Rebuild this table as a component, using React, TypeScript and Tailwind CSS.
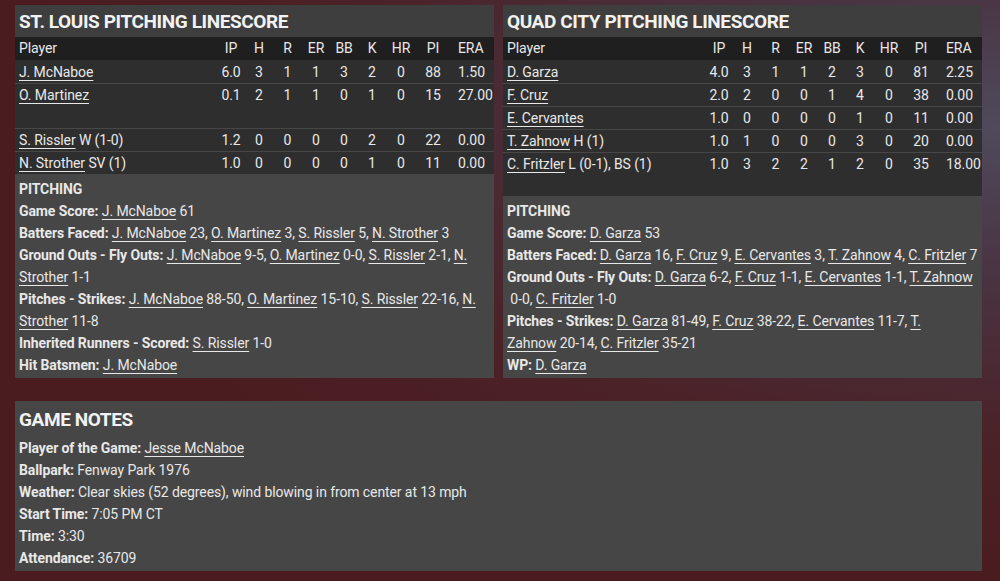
import React from "react";

type Row = { name: string; extra?: string; vals: string[]; tall?: boolean };

const cols = ["IP", "H", "R", "ER", "BB", "K", "HR", "PI", "ERA"];

const gridCls =
  "grid grid-cols-[1fr_28px_28px_29px_28px_28px_28px_30px_34px_44px] items-start";

function L({ children }: { children: React.ReactNode }) {
  return <span className="underline underline-offset-[3px] decoration-1">{children}</span>;
}

function B({ children }: { children: React.ReactNode }) {
  return <span className="font-bold">{children}</span>;
}

function Table({ rows }: { rows: Row[] }) {
  return (
    <div className="flex-1 bg-[#2e2e2e]">
      <div className={`${gridCls} h-[23px] bg-[#1f1f1f] leading-[23px]`}>
        <div className="pl-[4px]">Player</div>
        {cols.map((c) => (
          <div key={c} className={c === "ERA" ? "pl-[8px]" : "text-center"}>
            {c}
          </div>
        ))}
      </div>
      {rows.map((r, i) => (
        <div
          key={i}
          className={`${gridCls} leading-[22px] ${i > 0 ? "border-t border-[#474747]" : ""} ${
            r.tall ? "h-[45px]" : i > 0 ? "h-[23px]" : "h-[23px] pt-[0.5px]"
          }`}
        >
          <div className="pl-[4px] whitespace-nowrap">
            <L>{r.name}</L>
            {r.extra ? <span> {r.extra}</span> : null}
          </div>
          {r.vals.map((v, j) => (
            <div key={j} className={j === 8 ? "pl-[8px] whitespace-nowrap" : "text-center"}>
              {v}
            </div>
          ))}
        </div>
      ))}
    </div>
  );
}

function Panel({
  title,
  rows,
  children,
}: {
  title: string;
  rows: Row[];
  children: React.ReactNode;
}) {
  return (
    <div className="flex flex-col">
      <div className="h-[32px] bg-[#3e3e3e] pl-[4px] text-[19px] font-bold leading-[33px] tracking-[-0.4px] text-[#f2f2f2]">
        {title}
      </div>
      <Table rows={rows} />
      <div className="bg-[#464646] pl-[4px] pt-[4px] pb-[2px] leading-[22px]">{children}</div>
    </div>
  );
}

const leftRows: Row[] = [
  { name: "J. McNaboe", vals: ["6.0", "3", "1", "1", "3", "2", "0", "88", "1.50"] },
  { name: "O. Martinez", vals: ["0.1", "2", "1", "1", "0", "1", "0", "15", "27.00"], tall: true },
  { name: "S. Rissler", extra: "W (1-0)", vals: ["1.2", "0", "0", "0", "0", "2", "0", "22", "0.00"] },
  { name: "N. Strother", extra: "SV (1)", vals: ["1.0", "0", "0", "0", "0", "1", "0", "11", "0.00"] },
];

const rightRows: Row[] = [
  { name: "D. Garza", vals: ["4.0", "3", "1", "1", "2", "3", "0", "81", "2.25"] },
  { name: "F. Cruz", vals: ["2.0", "2", "0", "0", "1", "4", "0", "38", "0.00"] },
  { name: "E. Cervantes", vals: ["1.0", "0", "0", "0", "0", "1", "0", "11", "0.00"] },
  { name: "T. Zahnow", extra: "H (1)", vals: ["1.0", "1", "0", "0", "0", "3", "0", "20", "0.00"] },
  { name: "C. Fritzler", extra: "L (0-1), BS (1)", vals: ["1.0", "3", "2", "2", "1", "2", "0", "35", "18.00"] },
];

export default function App() {
  return (
    <div className="h-[581px] w-[1000px] overflow-hidden bg-[#4a1c1f] bg-[radial-gradient(ellipse_at_100%_22%,#4f4a5c_0%,#4a3443_22%,#4b2228_48%,#4a1c1f_70%)] pl-[15px] pt-[5px] font-[family-name:Roboto,sans-serif] text-[14px] tracking-[-0.1px] text-[#e8e8e8]">
      <div className="w-[967px]">
        <div className="grid grid-cols-2 gap-x-[9px]">
          <Panel title="ST. LOUIS PITCHING LINESCORE" rows={leftRows}>
            <div className="font-bold">PITCHING</div>
            <div>
              <B>Game Score:</B> <L>J. McNaboe</L> 61
            </div>
            <div>
              <B>Batters Faced:</B> <L>J. McNaboe</L> 23, <L>O. Martinez</L> 3, <L>S. Rissler</L> 5,{" "}
              <L>N. Strother</L> 3
            </div>
            <div>
              <B>Ground Outs - Fly Outs:</B> <L>J. McNaboe</L> 9-5, <L>O. Martinez</L> 0-0,{" "}
              <L>S. Rissler</L> 2-1, <L>N.</L>
            </div>
            <div>
              <L>Strother</L> 1-1
            </div>
            <div>
              <B>Pitches - Strikes:</B> <L>J. McNaboe</L> 88-50, <L>O. Martinez</L> 15-10,{" "}
              <L>S. Rissler</L> 22-16, <L>N.</L>
            </div>
            <div>
              <L>Strother</L> 11-8
            </div>
            <div>
              <B>Inherited Runners - Scored:</B> <L>S. Rissler</L> 1-0
            </div>
            <div>
              <B>Hit Batsmen:</B> <L>J. McNaboe</L>
            </div>
          </Panel>
          <Panel title="QUAD CITY PITCHING LINESCORE" rows={rightRows}>
            <div className="font-bold">PITCHING</div>
            <div>
              <B>Game Score:</B> <L>D. Garza</L> 53
            </div>
            <div className="whitespace-nowrap">
              <B>Batters Faced:</B> <L>D. Garza</L> 16, <L>F. Cruz</L> 9, <L>E. Cervantes</L> 3,{" "}
              <L>T. Zahnow</L> 4, <L>C. Fritzler</L> 7
            </div>
            <div className="whitespace-nowrap">
              <B>Ground Outs - Fly Outs:</B> <L>D. Garza</L> 6-2, <L>F. Cruz</L> 1-1,{" "}
              <L>E. Cervantes</L> 1-1, <L>T. Zahnow</L>
            </div>
            <div>
              &nbsp;0-0, <L>C. Fritzler</L> 1-0
            </div>
            <div>
              <B>Pitches - Strikes:</B> <L>D. Garza</L> 81-49, <L>F. Cruz</L> 38-22,{" "}
              <L>E. Cervantes</L> 11-7, <L>T.</L>
            </div>
            <div>
              <L>Zahnow</L> 20-14, <L>C. Fritzler</L> 35-21
            </div>
            <div>
              <B>WP:</B> <L>D. Garza</L>
            </div>
          </Panel>
        </div>
        <div className="mt-[23px] bg-[#464646] pl-[4px] pb-[2px]">
          <div className="h-[36px] text-[19px] font-bold leading-[37px] tracking-[-0.4px] text-[#f2f2f2]">
            GAME NOTES
          </div>
          <div className="leading-[22px]">
            <div>
              <B>Player of the Game:</B> <L>Jesse McNaboe</L>
            </div>
            <div>
              <B>Ballpark:</B> Fenway Park 1976
            </div>
            <div>
              <B>Weather:</B> Clear skies (52 degrees), wind blowing in from center at 13 mph
            </div>
            <div>
              <B>Start Time:</B> 7:05 PM CT
            </div>
            <div>
              <B>Time:</B> 3:30
            </div>
            <div>
              <B>Attendance:</B> 36709
            </div>
          </div>
        </div>
      </div>
    </div>
  );
}
